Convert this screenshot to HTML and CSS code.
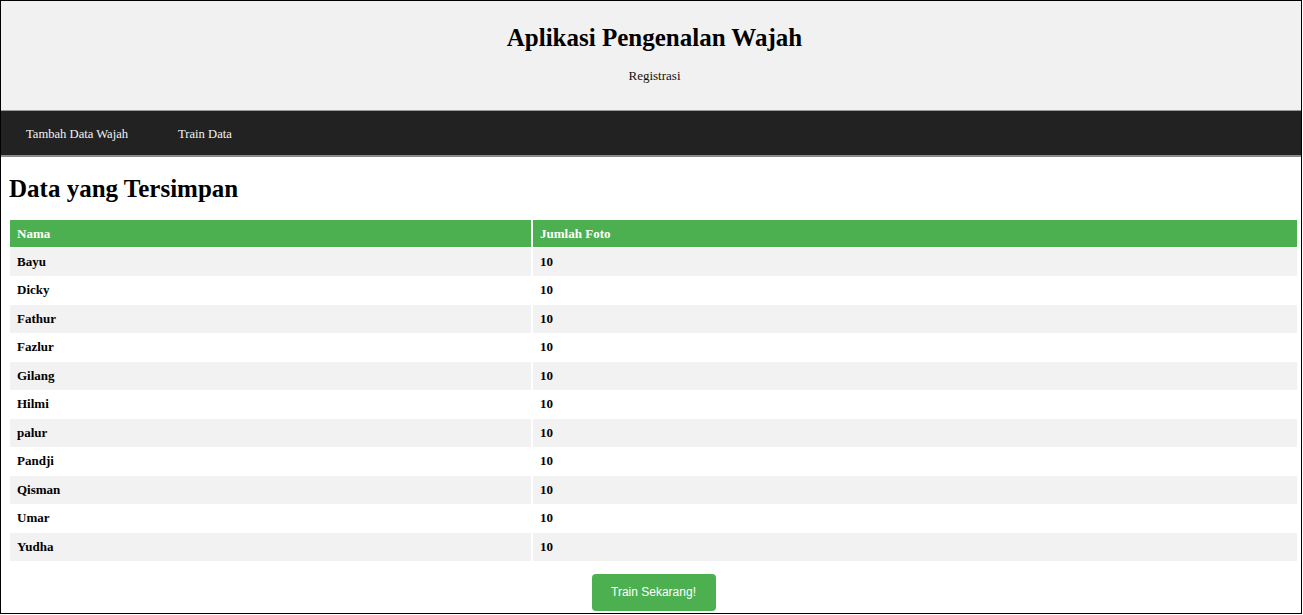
FILE: index.html
```html
<!DOCTYPE html>
<html>
<head>
<meta charset="utf-8">
<title>Aplikasi Pengenalan Wajah</title>
<link rel="stylesheet" href="styles.css">
</head>
<body>
<div class="page">
  <header class="header">
    <h1 class="title">Aplikasi Pengenalan Wajah</h1>
    <p class="subtitle">Registrasi</p>
  </header>
  <nav class="nav">
    <a class="nav-link" href="#">Tambah Data Wajah</a>
    <a class="nav-link" href="#">Train Data</a>
  </nav>
  <main class="content">
    <h2 class="heading">Data yang Tersimpan</h2>
    <table class="data">
      <thead>
        <tr><th class="col-name">Nama</th><th>Jumlah Foto</th></tr>
      </thead>
      <tbody>
        <tr><td>Bayu</td><td>10</td></tr>
        <tr><td>Dicky</td><td>10</td></tr>
        <tr><td>Fathur</td><td>10</td></tr>
        <tr><td>Fazlur</td><td>10</td></tr>
        <tr><td>Gilang</td><td>10</td></tr>
        <tr><td>Hilmi</td><td>10</td></tr>
        <tr><td>palur</td><td>10</td></tr>
        <tr><td>Pandji</td><td>10</td></tr>
        <tr><td>Qisman</td><td>10</td></tr>
        <tr><td>Umar</td><td>10</td></tr>
        <tr><td>Yudha</td><td>10</td></tr>
      </tbody>
    </table>
    <div class="actions">
      <button class="btn" type="button">Train Sekarang!</button>
    </div>
  </main>
</div>
</body>
</html>
```

FILE: styles.css
```css
html, body {
  margin: 0;
  padding: 0;
  background: #fff;
}
body {
  font-family: "Liberation Serif", "Times New Roman", serif;
  color: #000;
}
.page {
  box-sizing: border-box;
  width: 1302px;
  height: 614px;
  border: 1px solid #000;
  overflow: hidden;
  display: flex;
  flex-direction: column;
}
.header {
  background: #f1f1f1;
  height: 110px;
  border-bottom: 1px solid #9a9a9a;
  display: flex;
  flex-direction: column;
  align-items: center;
  box-sizing: border-box;
  padding: 21px 0 0 7px;
  flex-shrink: 0;
}
.title {
  margin: 0;
  font-size: 25px;
  font-weight: bold;
  line-height: 32px;
}
.subtitle {
  margin: 14px 0 0 0;
  font-size: 13px;
  line-height: 16px;
  color: #111;
}
.nav {
  background: #222;
  height: 44px;
  border-bottom: 2px solid #8a8a8a;
  box-sizing: content-box;
  display: flex;
  align-items: center;
  flex-shrink: 0;
}
.nav-link {
  color: #f2f2f2;
  text-decoration: none;
  font-size: 12.6px;
  line-height: 16px;
  padding: 15px 25px 13px;
}
.content {
  padding: 0 2px 0 7px;
  display: flex;
  flex-direction: column;
}
.heading {
  margin: 17px 0 0 1px;
  font-size: 25px;
  font-weight: bold;
  line-height: 30px;
}
.data {
  margin-top: 15px;
  width: 100%;
  border-collapse: separate;
  border-spacing: 2px 1px;
  font-size: 13px;
  font-weight: bold;
}
.data th, .data td {
  text-align: left;
  padding: 0 7px;
  height: 27.5px;
  box-sizing: border-box;
}
.data th {
  background: #4caf50;
  color: #fff;
  height: 27px;
}
.col-name {
  width: 40.55%;
}
.data tbody tr:nth-child(odd) td {
  background: #f2f2f2;
}
.actions {
  display: flex;
  justify-content: center;
  margin-top: 12px;
}
.btn {
  width: 124px;
  height: 37px;
  border: none;
  border-radius: 4px;
  background: #4caf50;
  color: #fff;
  font-family: "Liberation Sans", Arial, sans-serif;
  font-size: 12px;
  cursor: pointer;
}
```
